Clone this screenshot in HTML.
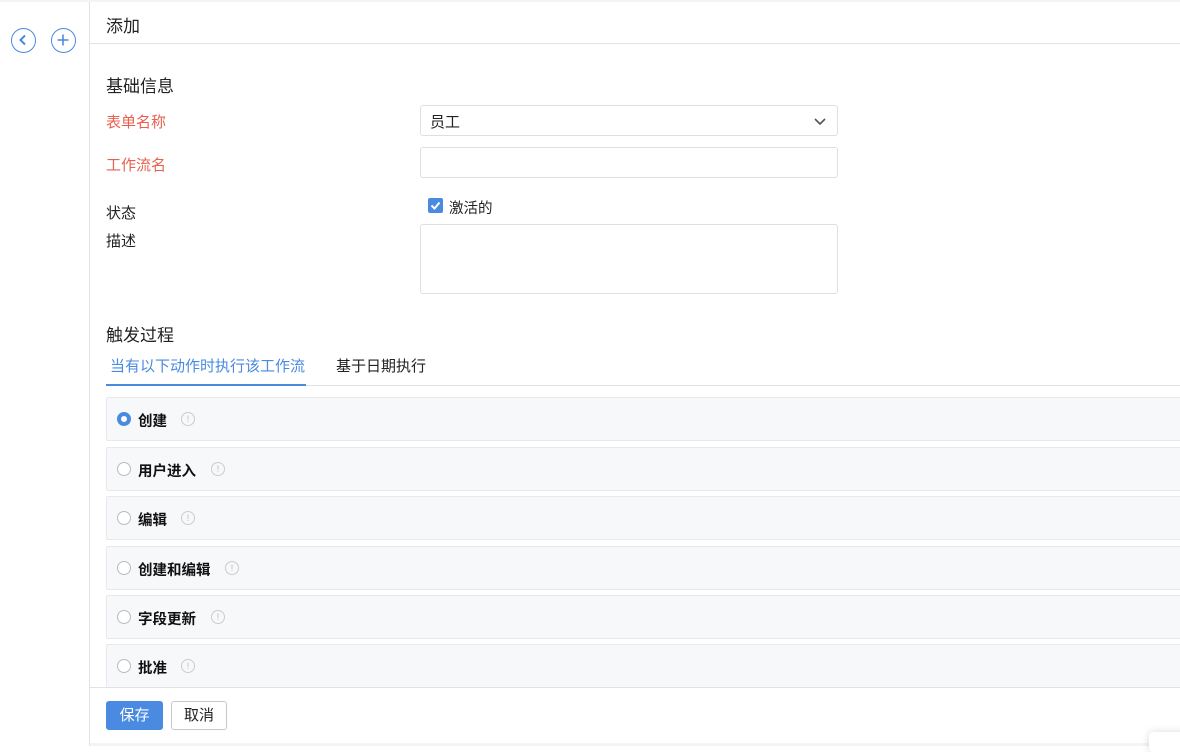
<!DOCTYPE html><html><head><meta charset="utf-8"><style>
*{box-sizing:border-box;margin:0;padding:0}
body{width:1180px;height:746px;overflow:hidden;background:#fff;font-family:"Liberation Sans","Noto Sans CJK SC",sans-serif;font-size:15px;color:#222;position:relative}
.a{position:absolute}
.circ{width:25px;height:25px;border:1.5px solid #4a8ae0;border-radius:50%}
.lbl{left:106px;font-size:15px}
.red{color:#e8604f}
.inp{left:420px;width:418px;border:1px solid #dcdfe6;border-radius:3px;background:#fff}
.row{left:106px;width:1080px;height:44px;background:#f7f8fa;border:1px solid #e8e9ec;border-radius:2px}
.rad{position:absolute;left:10px;top:14px;width:14px;height:14px;border:1.5px solid #bbb;border-radius:50%;background:#fff}
.rt{position:absolute;left:31px;top:12px;font-weight:bold;font-size:14.5px;color:#111}
.inf{position:absolute;top:14px;width:14px;height:14px;border:1px solid #ccc;border-radius:50%;font-size:9px;color:#bbb;text-align:center;line-height:12px}
</style></head><body>
<div class="a" style="left:0;top:0;width:1180px;height:2px;background:#f3f4f6"></div>
<div class="a" style="left:89px;top:2px;width:1px;height:744px;background:#e2e3e6"></div>
<div class="a circ" style="left:11px;top:28px"><svg width="22" height="22" style="position:absolute;left:0;top:0"><path d="M13 6.5 L8.5 11 L13 15.5" stroke="#4a8ae0" stroke-width="2" fill="none"/></svg></div>
<div class="a circ" style="left:51px;top:28px"><svg width="22" height="22" style="position:absolute;left:0;top:0"><path d="M11 5.5V16.5M5.5 11H16.5" stroke="#4a8ae0" stroke-width="1.6"/></svg></div>
<div class="a" style="left:106px;top:12px;font-size:17px">添加</div>
<div class="a" style="left:90px;top:43px;width:1090px;height:1px;background:#e2e3e6"></div>
<div class="a" style="left:106px;top:72px;font-size:17px">基础信息</div>
<div class="a lbl red" style="top:111px">表单名称</div>
<div class="a inp" style="top:105px;height:31px"><span style="position:absolute;left:9px;top:5px">员工</span><svg width="14" height="10" style="position:absolute;right:10px;top:11px"><path d="M2 2 L7 7 L12 2" stroke="#555" stroke-width="1.6" fill="none"/></svg></div>
<div class="a lbl red" style="top:154px">工作流名</div>
<div class="a inp" style="top:147px;height:31px"></div>
<div class="a lbl" style="top:202px">状态</div>
<div class="a" style="left:428px;top:198px;width:15px;height:15px;background:#4a8ae0;border-radius:2px"><svg width="15" height="15"><path d="M3.5 7.5 L6.5 10.5 L11.5 4.5" stroke="#fff" stroke-width="2" fill="none"/></svg></div>
<div class="a" style="left:449px;top:197px;font-size:14.5px">激活的</div>
<div class="a lbl" style="top:230px">描述</div>
<div class="a inp" style="top:224px;height:70px"></div>
<div class="a" style="left:106px;top:321px;font-size:17px">触发过程</div>
<div class="a" style="left:110px;top:355px;color:#4a8ae0">当有以下动作时执行该工作流</div>
<div class="a" style="left:336px;top:355px;color:#222">基于日期执行</div>
<div class="a" style="left:106px;top:385px;width:1074px;height:1px;background:#e2e3e6"></div>
<div class="a" style="left:106px;top:384px;width:200px;height:2px;background:#4a8ae0"></div>
<div class="a row" style="top:397px"><div class="rad" style="border:4px solid #4a8ae0"></div><div class="rt">创建</div><div class="inf" style="left:74px">!</div></div>
<div class="a row" style="top:447px"><div class="rad"></div><div class="rt">用户进入</div><div class="inf" style="left:104px">!</div></div>
<div class="a row" style="top:496px"><div class="rad"></div><div class="rt">编辑</div><div class="inf" style="left:74px">!</div></div>
<div class="a row" style="top:546px"><div class="rad"></div><div class="rt">创建和编辑</div><div class="inf" style="left:118px">!</div></div>
<div class="a row" style="top:595px"><div class="rad"></div><div class="rt">字段更新</div><div class="inf" style="left:104px">!</div></div>
<div class="a row" style="top:644px"><div class="rad"></div><div class="rt">批准</div><div class="inf" style="left:74px">!</div></div>
<div class="a" style="left:90px;top:687px;width:1090px;height:59px;background:#fff;border-top:1px solid #e2e3e6"></div>
<div class="a" style="left:106px;top:701px;width:57px;height:29px;background:#4a8ae0;border-radius:3px;color:#fff;text-align:center;line-height:29px">保存</div>
<div class="a" style="left:171px;top:701px;width:56px;height:29px;border:1px solid #c8c8c8;border-radius:3px;text-align:center;line-height:27px">取消</div>
<div class="a" style="left:90px;top:743px;width:1090px;height:3px;background:#f3f4f6"></div>
<div class="a" style="left:1149px;top:732px;width:40px;height:20px;background:#fff;border-radius:4px;box-shadow:0 0 8px rgba(0,0,0,.15)"></div>
</body></html>
